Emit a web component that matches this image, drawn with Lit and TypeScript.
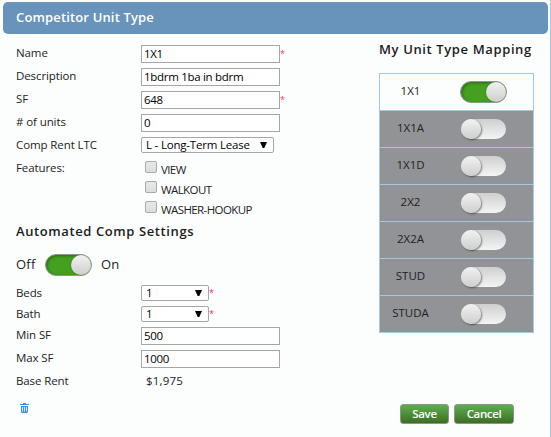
import { LitElement, html, css, svg } from "lit";
import { customElement, property } from "lit/decorators.js";

@customElement("toggle-switch")
class ToggleSwitch extends LitElement {
  @property({ type: Boolean, reflect: true }) on = false;
  static styles = css`
    :host { display: block; width: 47px; height: 22px; flex: none; }
    .track { box-sizing: border-box; display: flex; align-items: center; width: 45px; height: 20px; margin: 1px; border-radius: 10px; background: linear-gradient(#cfcfcf, #f4f4f4); }
    .knob { width: 20px; height: 20px; border-radius: 50%; background: linear-gradient(#f2f2f2, #cecece); box-shadow: 1px 1px 2px rgba(0, 0, 0, 0.5), -0.5px 0 0 #8fb382; }
    :host([on]) .track { width: 47px; height: 22px; margin: 0; border: 1px solid #949494; border-radius: 11px; justify-content: flex-end; background: #45a020; box-shadow: inset 1px 1px 3px #246b10; }
    :host([on]) .knob { box-shadow: -1px 0 1px #498335; }
  `;
  render() {
    return html`<div class="track"><div class="knob"></div></div>`;
  }
}

@customElement("app-root")
class AppRoot extends LitElement {
  static styles = css`
    * { box-sizing: border-box; }
    :host { display: block; width: 551px; height: 437px; overflow: hidden; background: #fcfefe; color: #222; font: 11.5px/18px "Open Sans", "Noto Sans", sans-serif; }
    .panel { height: 437px; padding: 2px 2px 0 3px; border-right: 1px solid #a5c8e2; }
    .title { height: 32px; padding: 0 13px; border-radius: 5px; background: #6893ba; color: #fff; font-size: 13px; font-weight: 600; line-height: 31px; letter-spacing: 0.15px; }
    .body { display: flex; height: 403px; }
    .form { width: 376px; padding: 11px 0 0 13px; }
    .row { display: flex; height: 23px; }
    .row.short { height: 21px; }
    .label { width: 125px; line-height: 16px; letter-spacing: -0.1px; }
    .field { width: 139px; height: 18px; padding: 0 2px; border: 1px solid #a6a6a6; background: #fff; color: #000; line-height: 16px; letter-spacing: -0.3px; }
    .select { display: flex; align-items: center; justify-content: space-between; width: 133px; height: 16px; padding: 0 6px 0 4px; border: 1px solid #a6a6a6; border-radius: 2px; background: #fff; color: #000; line-height: 14px; letter-spacing: -0.2px; }
    .select.small { width: 68px; }
    .star { color: #f04060; font-size: 9px; line-height: 18px; }
    .magenta { color: #f01888; line-height: 16px; }
    .features { height: 61px; }
    .features .label { line-height: 15px; }
    .checks { padding: 0 0 0 4px; }
    .check { display: flex; height: 20px; gap: 4px; }
    .box { width: 12px; height: 12px; margin-top: 1px; border: 1px solid #a9a9a9; border-radius: 2px; background: linear-gradient(#e9e9e9, #dcdcdc); }
    .check span { line-height: 20px; letter-spacing: -0.6px; }
    .heading { font-size: 13px; font-weight: 600; letter-spacing: 0.6px; color: #1c1c1c; }
    .auto { height: 25px; line-height: 19px; margin-top: 1px; }
    .switchline { display: flex; height: 38px; line-height: 21px; padding-top: 7px; font-size: 13px; letter-spacing: 0.2px; }
    .off { width: 29px; }
    .on { margin-left: 9px; }
    .rent { padding-left: 5px; line-height: 16px; letter-spacing: 0.2px; }
    .trash { display: block; margin: 7px 0 0 4px; }
    .side { width: 155px; padding-top: 7px; }
    .side .heading { height: 32px; line-height: 17px; white-space: nowrap; letter-spacing: 0.62px; }
    .list { border: 1px solid #a5c8e2; border-bottom: 0; }
    .item { display: flex; height: 37px; padding-top: 7px; border-bottom: 1px solid #a5c8e2; background: #929396; }
    .item.selected { background: #fcfefe; }
    .name { width: 61px; margin-right: 19px; text-align: center; line-height: 20px; }
    .actions { display: flex; gap: 5px; margin: 71px 0 0 21px; }
    .button { width: 49px; height: 20px; border: 1px solid #8d968a; border-radius: 3px; background: linear-gradient(#5fae50, #3c6f24); color: #fff; font-weight: 600; text-align: center; line-height: 18px; letter-spacing: -0.35px; }
    .button.wide { width: 60px; }
  `;

  arrow() {
    return svg`<svg width="7" height="6" viewBox="0 0 7 6"><path d="M0 0H7L4.3 6H2.7Z" fill="#000"/></svg>`;
  }

  input(label: string, value: string, required = false) {
    return html`<div class="row"><div class="label">${label}</div><div class="field">${value}</div>${required ? html`<span class="star">*</span>` : ""}</div>`;
  }

  select(label: string) {
    return html`<div class="row short"><div class="label">${label}</div><div class="select small">1 ${this.arrow()}</div><span class="star magenta">*</span></div>`;
  }

  render() {
    return html`<div class="panel">
      <div class="title">Competitor Unit Type</div>
      <div class="body">
        <div class="form">
          ${this.input("Name", "1X1", true)}
          ${this.input("Description", "1bdrm 1ba in bdrm")}
          ${this.input("SF", "648", true)}
          ${this.input("# of units", "0")}
          <div class="row"><div class="label">Comp Rent LTC</div><div class="select"><span>L - Long-Term Lease</span>${this.arrow()}</div></div>
          <div class="row features">
            <div class="label">Features:</div>
            <div class="checks">
              ${["VIEW", "WALKOUT", "WASHER-HOOKUP"].map((t) => html`<div class="check"><div class="box"></div><span>${t}</span></div>`)}
            </div>
          </div>
          <div class="heading auto">Automated Comp Settings</div>
          <div class="switchline"><span class="off">Off</span><toggle-switch on></toggle-switch><span class="on">On</span></div>
          ${this.select("Beds")}
          ${this.select("Bath")}
          ${this.input("Min SF", "500")}
          ${this.input("Max SF", "1000")}
          <div class="row"><div class="label">Base Rent</div><div class="rent">$1,975</div></div>
          <svg class="trash" width="9" height="10" viewBox="0 0 9 10"><path d="M0 1H3V0H6V1H9V2H0ZM1 3H8V9L7 10H2L1 9Z" fill="#3d91d6"/><path d="M2.5 4V8.5M4.5 4V8.5M6.5 4V8.5" stroke="#e4f1fb" stroke-width=".9"/></svg>
        </div>
        <div class="side">
          <div class="heading">My Unit Type Mapping</div>
          <div class="list">
            ${["1X1", "1X1A", "1X1D", "2X2", "2X2A", "STUD", "STUDA"].map((t, i) => html`<div class="item ${i === 0 ? "selected" : ""}"><span class="name">${t}</span><toggle-switch ?on=${i === 0}></toggle-switch></div>`)}
          </div>
          <div class="actions"><div class="button">Save</div><div class="button wide">Cancel</div></div>
        </div>
      </div>
    </div>`;
  }
}
